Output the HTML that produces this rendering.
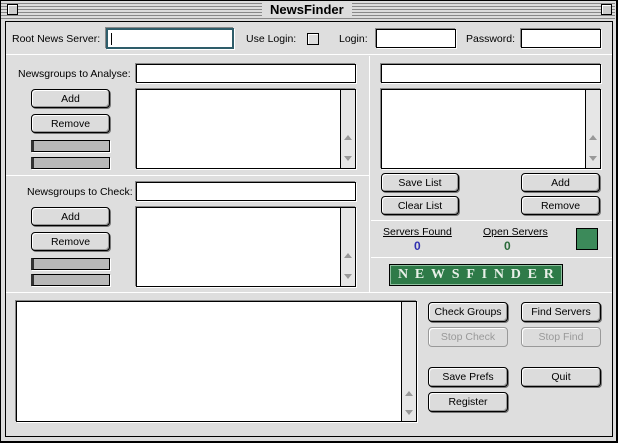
<!DOCTYPE html>
<html><head><meta charset="utf-8"><style>
*{box-sizing:border-box;margin:0;padding:0}
body{width:618px;height:443px;background:#fff;position:relative;overflow:hidden;font-family:"Liberation Sans",sans-serif;font-size:10.5px;color:#000}
.a{position:absolute}
.win{left:0;top:0;width:618px;height:443px;background:#dcdcdc;border:1px solid #000;border-right:2px solid #000;border-bottom:2px solid #000}
.title{left:1px;top:1px;width:614px;height:18px;background:repeating-linear-gradient(#dcdcdc 0 2px,#888 2px 3px);}
.tt{left:262px;top:2px;background:#dcdcdc;padding:0 8px;font-weight:bold;font-size:13px;line-height:15px}
.box{width:11px;height:11px;border:1px solid #000;background:#ccc;box-shadow:inset 1px 1px #fff}
.panel{left:5px;top:21px;width:608px;height:416px;border:1px solid #000;background:#dedede}
.hl{height:1px;background:#999;border-bottom:1px solid #fff}
.vl{width:1px;background:#999;border-right:1px solid #fff}
.inp{background:#fff;border:1px solid #000;box-shadow:-1px -1px #888,1px 1px #fff}
.lbl{font-size:10.5px;line-height:13px;white-space:nowrap}
.btn{background:#dcdcdc;border:1px solid #000;border-radius:4px;box-shadow:inset 1px 1px #fff,inset -1px -1px #999,1px 1px #777;text-align:center;font-size:10.5px;line-height:17px;padding-top:1px}
.dis{color:#999;border-color:#999;box-shadow:inset 1px 1px #fff}
.bar{background:#b8b8b8;border:1px solid #000;border-left:3px solid #333;box-shadow:1px 1px #fff}
.sb{background:#e6e6e6;border-left:1px solid #000}
.ar{position:absolute;left:3px;width:0;height:0;border-left:4px solid transparent;border-right:4px solid transparent}
</style></head><body>
<div class="a win"></div>
<div class="a title"></div>
<div class="a box" style="left:7px;top:4px"></div>
<div class="a box" style="left:601px;top:4px"></div>
<div class="a tt">NewsFinder</div>
<div class="a panel"></div>

<div class="a lbl" style="left:12px;top:33px">Root News Server:</div>
<div class="a inp" style="left:106px;top:28px;width:128px;height:21px;border:2px solid #2e5d6a;"><div class="a" style="left:3px;top:3px;width:1px;height:12px;background:#000"></div></div>
<div class="a lbl" style="left:246px;top:33px">Use Login:</div>
<div class="a" style="left:307px;top:33px;width:12px;height:12px;border:1px solid #000;background:#ddd;box-shadow:inset 1px 1px #fff"></div>
<div class="a lbl" style="left:339px;top:33px">Login:</div>
<div class="a inp" style="left:376px;top:29px;width:80px;height:19px"></div>
<div class="a lbl" style="left:466px;top:33px">Password:</div>
<div class="a inp" style="left:521px;top:29px;width:80px;height:19px"></div>
<div class="a hl" style="left:6px;top:54px;width:606px"></div>

<div class="a vl" style="left:369px;top:56px;height:236px"></div>

<div class="a lbl" style="left:18px;top:68px">Newsgroups to Analyse:</div>
<div class="a inp" style="left:136px;top:64px;width:220px;height:19px"></div>
<div class="a btn" style="left:31px;top:89px;width:79px;height:19px">Add</div>
<div class="a btn" style="left:31px;top:114px;width:79px;height:19px">Remove</div>
<div class="a bar" style="left:31px;top:140px;width:79px;height:12px"></div>
<div class="a bar" style="left:31px;top:157px;width:79px;height:12px"></div>
<div class="a inp" style="left:136px;top:89px;width:220px;height:80px"><div class="a sb" style="left:203px;top:0;width:15px;height:78px"><div class="ar" style="top:45px;border-bottom:5px solid #999"></div><div class="ar" style="top:66px;border-top:5px solid #999"></div></div></div>
<div class="a hl" style="left:6px;top:175px;width:363px"></div>

<div class="a lbl" style="left:27px;top:186px">Newsgroups to Check:</div>
<div class="a inp" style="left:136px;top:182px;width:220px;height:19px"></div>
<div class="a btn" style="left:31px;top:207px;width:79px;height:19px">Add</div>
<div class="a btn" style="left:31px;top:232px;width:79px;height:19px">Remove</div>
<div class="a bar" style="left:31px;top:258px;width:79px;height:12px"></div>
<div class="a bar" style="left:31px;top:274px;width:79px;height:12px"></div>
<div class="a inp" style="left:136px;top:207px;width:220px;height:80px"><div class="a sb" style="left:203px;top:0;width:15px;height:78px"><div class="ar" style="top:45px;border-bottom:5px solid #999"></div><div class="ar" style="top:66px;border-top:5px solid #999"></div></div></div>

<div class="a inp" style="left:381px;top:64px;width:220px;height:19px"></div>
<div class="a inp" style="left:381px;top:89px;width:220px;height:80px"><div class="a sb" style="left:203px;top:0;width:15px;height:78px"><div class="ar" style="top:45px;border-bottom:5px solid #999"></div><div class="ar" style="top:66px;border-top:5px solid #999"></div></div></div>
<div class="a btn" style="left:381px;top:173px;width:78px;height:19px">Save List</div>
<div class="a btn" style="left:381px;top:196px;width:78px;height:19px">Clear List</div>
<div class="a btn" style="left:521px;top:173px;width:79px;height:19px">Add</div>
<div class="a btn" style="left:521px;top:196px;width:79px;height:19px">Remove</div>
<div class="a hl" style="left:371px;top:220px;width:241px"></div>
<div class="a lbl" style="left:383px;top:226px;text-decoration:underline">Servers Found</div>
<div class="a lbl" style="left:483px;top:226px;text-decoration:underline">Open Servers</div>
<div class="a lbl" style="left:414px;top:240px;color:#3030b0;font-weight:bold;font-size:12px">0</div>
<div class="a lbl" style="left:504px;top:240px;color:#2a6a3a;font-weight:bold;font-size:12px">0</div>
<div class="a" style="left:576px;top:228px;width:22px;height:22px;background:#3c8a5a;border:1px solid #000"></div>
<div class="a hl" style="left:371px;top:257px;width:241px"></div>
<div class="a" style="left:389px;top:264px;width:174px;height:22px;background:#2e7a48;border:1px solid #000;box-shadow:inset 0 0 0 1px #8fbf9f;color:#e8f0e8;font-family:'Liberation Serif',serif;font-weight:bold;font-size:14px;line-height:20px;display:flex;justify-content:space-between;padding:0 8px"><span>N</span><span>E</span><span>W</span><span>S</span><span>F</span><span>I</span><span>N</span><span>D</span><span>E</span><span>R</span></div>

<div class="a hl" style="left:6px;top:292px;width:606px"></div>

<div class="a inp" style="left:16px;top:301px;width:401px;height:121px"><div class="a sb" style="left:384px;top:0;width:15px;height:119px"><div class="ar" style="top:89px;border-bottom:5px solid #999"></div><div class="ar" style="top:108px;border-top:5px solid #999"></div></div></div>
<div class="a btn" style="left:428px;top:302px;width:80px;height:20px">Check Groups</div>
<div class="a btn" style="left:521px;top:302px;width:80px;height:20px">Find Servers</div>
<div class="a btn dis" style="left:428px;top:327px;width:80px;height:20px">Stop Check</div>
<div class="a btn dis" style="left:521px;top:327px;width:80px;height:20px">Stop Find</div>
<div class="a btn" style="left:428px;top:367px;width:80px;height:20px">Save Prefs</div>
<div class="a btn" style="left:521px;top:367px;width:80px;height:20px">Quit</div>
<div class="a btn" style="left:428px;top:392px;width:80px;height:20px">Register</div>
</body></html>
